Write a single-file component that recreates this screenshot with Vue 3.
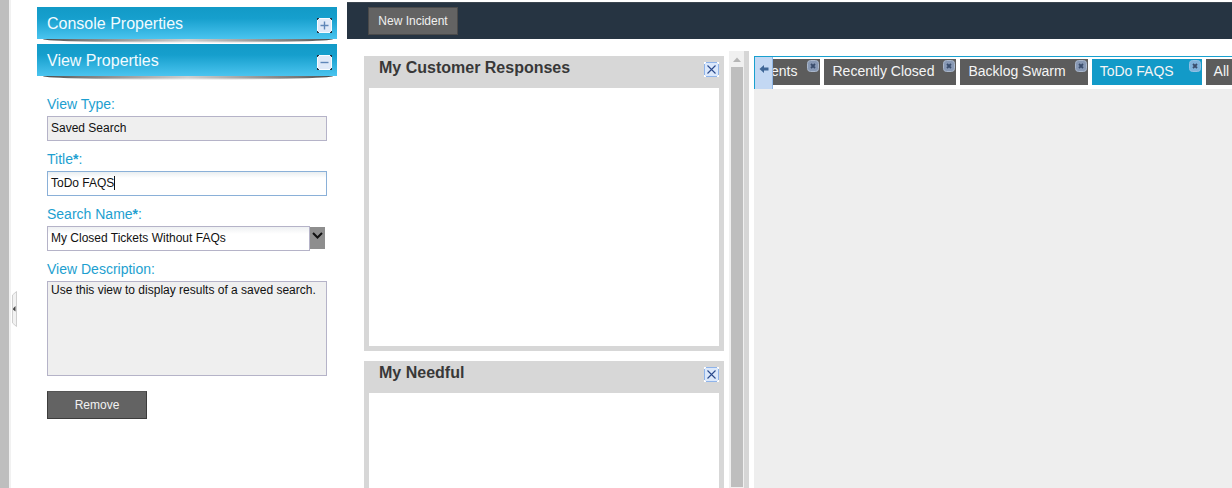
<script setup>
const panels = [
  { title: 'My Customer Responses', bodyHeight: 258 },
  { title: 'My Needful', bodyHeight: 95 },
]
const tabs = [
  { label: 'All Incidents', first: true },
  { label: 'Recently Closed' },
  { label: 'Backlog Swarm' },
  { label: 'ToDo FAQS', active: true },
  { label: 'All', last: true },
]
</script>

<template>
  <div class="page">
    <div class="rail"></div>
    <div class="handle">
      <svg width="6" height="36" viewBox="0 0 6 36">
        <path d="M4.5 0.5V35.5L0.5 32V4Z" fill="#f2f2f2" stroke="#cfcfcf" />
        <path d="M1 17.5L3.5 15V20.5L1 18.5Z" fill="#444" />
      </svg>
    </div>

    <aside class="sidebar">
      <div class="bar-wrap">
        <div class="bar">
          <span>Console Properties</span>
          <svg class="toggle" width="15" height="15" viewBox="0 0 15 15">
            <rect x="0.5" y="0.5" width="14" height="14" rx="1" fill="#dfe9f8" stroke="#f7fbff" />
            <path d="M0 0h2v1H1v1H0zM13 0h2v2h-1V1h-1zM0 13h1v1h1v1H0zM14 13h1v2h-2v-1h1z" fill="#263442" />
            <path d="M7.5 3.5v8M3.5 7.5h8" stroke="#5f86b8" stroke-width="1.4" />
          </svg>
        </div>
        <div class="bar-shadow"></div>
      </div>
      <div class="bar-wrap second">
        <div class="bar">
          <span>View Properties</span>
          <svg class="toggle" width="15" height="15" viewBox="0 0 15 15">
            <rect x="0.5" y="0.5" width="14" height="14" rx="1" fill="#dfe9f8" stroke="#f7fbff" />
            <path d="M0 0h2v1H1v1H0zM13 0h2v2h-1V1h-1zM0 13h1v1h1v1H0zM14 13h1v2h-2v-1h1z" fill="#263442" />
            <path d="M3.5 7.5h8" stroke="#5f86b8" stroke-width="1.4" />
          </svg>
        </div>
        <div class="bar-shadow"></div>
      </div>

      <form class="form" @submit.prevent>
        <label class="label">View Type:</label>
        <div class="field readonly">Saved Search</div>

        <label class="label">Title<b>*</b>:</label>
        <div class="field focus">ToDo FAQS<i class="caret"></i></div>

        <label class="label">Search Name<b>*</b>:</label>
        <div class="select-row">
          <div class="field select">My Closed Tickets Without FAQs</div>
          <div class="arrow">
            <svg width="11" height="7" viewBox="0 0 11 7">
              <path d="M1 1L5.5 5.5L10 1" fill="none" stroke="#111" stroke-width="2" />
            </svg>
          </div>
        </div>

        <label class="label">View Description:</label>
        <div class="field readonly area">Use this view to display results of a saved search.</div>

        <button class="remove" type="button">Remove</button>
      </form>
    </aside>

    <main class="main">
      <div class="toolbar">
        <button class="new" type="button">New Incident</button>
      </div>

      <div class="workspace">
        <section class="panels">
          <article v-for="p in panels" :key="p.title" class="panel">
            <header class="panel-head">
              <h2>{{ p.title }}</h2>
              <svg class="close" width="15" height="15" viewBox="0 0 15 15">
                <rect x="0.5" y="0.5" width="14" height="14" rx="1" fill="#dbe8fb" stroke="#8fb4ea" />
                <path d="M0 0h2v1H1v1H0zM13 0h2v2h-1V1h-1zM0 13h1v1h1v1H0zM14 13h1v2h-2v-1h1z" fill="#fff" />
                <path d="M3.5 3.5l8 8M11.5 3.5l-8 8" stroke="#2a4a8c" stroke-width="1.1" />
              </svg>
            </header>
            <div class="panel-body" :style="{ height: p.bodyHeight + 'px' }"></div>
          </article>
        </section>

        <div class="scroll">
          <div class="scroll-track">
            <svg class="scroll-up" width="10" height="6" viewBox="0 0 10 6">
              <path d="M5 0.5L9 5H1Z" fill="#b5b5b5" />
            </svg>
            <div class="scroll-thumb"></div>
          </div>
          <div class="scroll-gutter"></div>
        </div>

        <section class="view">
          <div class="tabstrip">
            <div class="tabs">
              <div
                v-for="t in tabs"
                :key="t.label"
                class="tab"
                :class="{ active: t.active, first: t.first, last: t.last }"
              >
                {{ t.label }}
                <svg v-if="!t.last" class="tab-x" width="12" height="12" viewBox="0 0 12 12">
                  <rect x="0.5" y="0.5" width="11" height="11" rx="3" fill="#8798b4" stroke="#a9b6ca" />
                  <path d="M4 4l4 4M8 4l-4 4" stroke="#3a4d6c" stroke-width="1.8" />
                </svg>
              </div>
            </div>
            <div class="scroll-left">
              <svg width="10" height="10" viewBox="0 0 10 10">
                <path d="M0.5 5L5 1V3.5H9.5V6.5H5V9Z" fill="#3f6797" />
              </svg>
            </div>
          </div>
          <div class="view-body"></div>
        </section>
      </div>
    </main>
  </div>
</template>

<style>
html, body {
  margin: 0;
  overflow: hidden;
  background: #fff;
}
</style>

<style scoped>
.page {
  position: relative;
  display: flex;
  width: 1232px;
  height: 488px;
  overflow: hidden;
  background: #fff;
  font-family: "Liberation Sans", Arial, sans-serif;
}
.rail {
  flex: none;
  width: 9px;
  margin-right: 2px;
  background: #bebebe;
  box-shadow: 2px 0 0 #f1f1f1;
}
.handle {
  position: absolute;
  left: 12px;
  top: 291px;
  width: 6px;
  height: 36px;
}
.handle svg { display: block; }

.sidebar {
  flex: none;
  width: 300px;
  margin: 0 10px 0 26px;
  padding-top: 7px;
}
.bar-wrap { position: relative; }
.bar-wrap.second { margin-top: 5px; }
.bar {
  position: relative;
  height: 32px;
  box-sizing: border-box;
  padding: 8px 0 0 10px;
  color: #f2fbff;
  font-size: 16px;
  line-height: 18px;
  background: linear-gradient(#129ac7 0, #169fcd 35%, #4ac4ef 100%);
}
.toggle {
  position: absolute;
  left: 280px;
  top: 11px;
}
.bar-shadow {
  position: absolute;
  left: 6px;
  right: 4px;
  top: 32px;
  height: 4px;
  background:
    linear-gradient(#0000 0, #0000 45%, #fff 100%),
    linear-gradient(90deg, #4a4a4a 0, #777 12%, #cfcfcf 50%, #777 88%, #4a4a4a 100%);
  border-radius: 0 0 50% 50% / 0 0 100% 100%;
}

.form {
  display: flex;
  flex-direction: column;
  align-items: flex-start;
  padding: 20px 0 0 10px;
}
.label {
  height: 16px;
  color: #1d9fd0;
  font-size: 14px;
  line-height: 16px;
  margin-bottom: 4px;
}
.label b { font-weight: bold; }
.field {
  box-sizing: border-box;
  width: 280px;
  height: 25px;
  margin-bottom: 10px;
  padding: 0 3px;
  border: 1px solid #b5b3c8;
  color: #111;
  font-size: 12px;
  line-height: 23px;
  background: #fff;
}
.readonly { background: #efefef; }
.focus {
  border-color: #8ab0d8;
  background: linear-gradient(#e9eef0 0, #fff 6px);
}
.caret {
  display: inline-block;
  width: 1px;
  height: 14px;
  margin-left: 0;
  vertical-align: -3px;
  background: #111;
}
.select-row {
  display: flex;
  margin-bottom: 10px;
}
.select {
  width: 263px;
  margin-bottom: 0;
  background: linear-gradient(#eef0f2 0, #fff 7px);
}
.arrow {
  display: flex;
  justify-content: center;
  box-sizing: border-box;
  width: 15px;
  height: 22px;
  margin-top: 1px;
  padding-top: 5px;
  background: #8e8e8e;
}
.arrow svg { display: block; }
.area {
  height: 95px;
  line-height: 16px;
  margin-bottom: 15px;
  padding-top: 0;
}
.remove {
  box-sizing: border-box;
  width: 100px;
  height: 28px;
  padding: 0;
  border: 1px solid #3c3c3c;
  border-top-color: #555;
  color: #f2f2f2;
  font: 12px "Liberation Sans", Arial, sans-serif;
  background: #636363;
}

.main {
  flex: none;
  width: 885px;
  display: flex;
  flex-direction: column;
}
.toolbar {
  flex: none;
  height: 37px;
  margin-top: 2px;
  box-sizing: border-box;
  padding: 5px 0 0 21px;
  border-top: 1px solid #3b4650;
  background: #263442;
}
.new {
  display: block;
  box-sizing: border-box;
  width: 90px;
  height: 28px;
  margin-top: -1px;
  padding: 0;
  border: 1px solid #4a4a4a;
  color: #f0f0f0;
  font: 12px "Liberation Sans", Arial, sans-serif;
  background: #636363;
}

.workspace {
  flex: 1;
  min-height: 0;
  display: flex;
  padding: 12px 0 0 17px;
}
.panels {
  flex: none;
  width: 360px;
  margin-top: 5px;
}
.panel {
  margin-bottom: 10px;
  padding: 0 5px 5px;
  background: #d7d7d7;
}
.panel-head {
  position: relative;
  height: 32px;
}
.panel-head h2 {
  margin: 0;
  padding: 2px 0 0 10px;
  color: #383838;
  font-size: 16px;
  line-height: 19px;
  font-weight: bold;
}
.close {
  position: absolute;
  left: 335px;
  top: 6px;
}
.panel-body { background: #fff; }

.scroll {
  flex: none;
  display: flex;
  width: 20px;
  margin-left: 5px;
}
.scroll-track {
  display: flex;
  flex-direction: column;
  align-items: center;
  width: 15px;
  background: #f0f0f0;
}
.scroll-up {
  display: block;
  margin: 6px 0 4px;
}
.scroll-thumb {
  flex: 1;
  width: 12px;
  margin-bottom: 1px;
  background: #bebebe;
}
.scroll-gutter {
  width: 5px;
  background: #d6d6d6;
}

.view {
  flex: none;
  width: 478px;
  margin: 5px 0 0 5px;
  display: flex;
  flex-direction: column;
}
.tabstrip {
  position: relative;
  flex: none;
  height: 33px;
  box-sizing: border-box;
  border-top: 1px solid #18a0cf;
  border-left: 1px solid #18a0cf;
  overflow: hidden;
}
.tabs {
  display: flex;
  gap: 4px;
  margin-top: 2px;
  margin-left: -40px;
}
.tab {
  position: relative;
  flex: none;
  height: 26px;
  box-sizing: border-box;
  padding: 0 22px 0 8px;
  color: #f5f5f5;
  font-size: 14px;
  line-height: 25px;
  white-space: nowrap;
  background: #5c5c5c;
}
.tab.first { padding: 0 23px 0 7px; }
.tab.active {
  padding-right: 28px;
  background: #129ac8;
}
.tab.last { padding-right: 40px; }
.tab-x {
  position: absolute;
  right: 1px;
  top: 1px;
}
.tab.active .tab-x rect {
  fill: #7fb3dc;
  stroke: #8fc0e4;
}
.scroll-left {
  position: absolute;
  left: 0;
  top: 0;
  box-sizing: border-box;
  width: 18px;
  height: 32px;
  padding: 7px 0 0 4px;
  border-right: 1px solid #8fb6e6;
  background: #c3d8f3;
}
.scroll-left svg { display: block; }
.view-body {
  flex: 1;
  background: #eee;
}
</style>
